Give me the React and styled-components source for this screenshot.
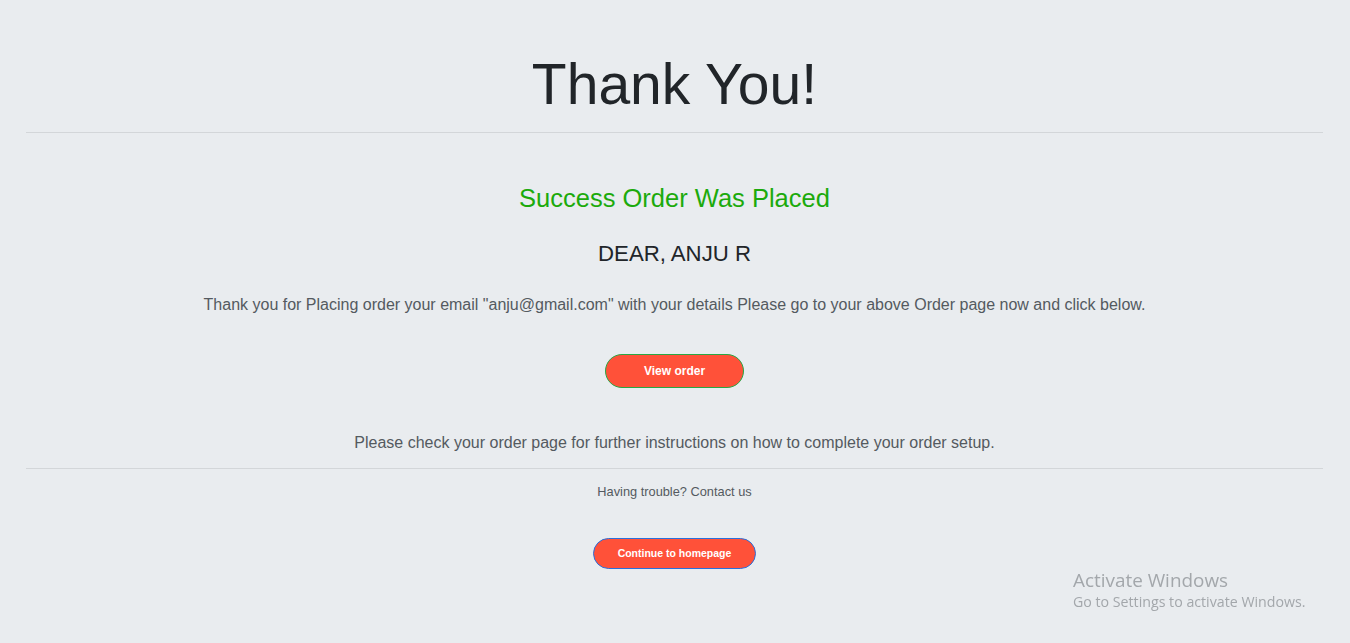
import React from "react";
import styled, { createGlobalStyle } from "styled-components";

const Global = createGlobalStyle`
  html, body { margin: 0; padding: 0; background: #e9ecef; }
  body { font-family: "Liberation Sans", Arial, sans-serif; color: #212529; }
`;

const Page = styled.main`
  min-height: 643px;
  box-sizing: border-box;
  padding: 50px 27px 0 26px;
  display: flex;
  flex-direction: column;
  align-items: center;
  text-align: center;
`;

const Title = styled.h1`
  margin: 0;
  font-size: 57px;
  font-weight: 400;
  line-height: 1.2;
  color: #212529;
`;

const Rule = styled.hr`
  align-self: stretch;
  margin: ${(p) => p.$top}px 0 0;
  border: 0;
  border-top: 1px solid #d3d6d9;
  height: 0;
`;

const Heading = styled.h3`
  margin: ${(p) => p.$top}px 0 0;
  font-size: ${(p) => p.$size}px;
  font-weight: 400;
  line-height: 1.2;
  color: ${(p) => p.$color};
`;

const Text = styled.p`
  margin: ${(p) => p.$top}px 0 0;
  font-size: ${(p) => p.$size}px;
  line-height: 1.5;
  color: #545a60;
`;

const PillButton = styled.a`
  margin-top: ${(p) => p.$top}px;
  box-sizing: border-box;
  display: inline-flex;
  align-items: center;
  justify-content: center;
  width: ${(p) => p.$w}px;
  height: ${(p) => p.$h}px;
  border-radius: 999px;
  background: #ff5139;
  border: 1px solid ${(p) => p.$border};
  color: #ffffff;
  font-weight: 700;
  font-size: ${(p) => p.$size}px;
  text-decoration: none;
  cursor: pointer;
`;

const Watermark = styled.div`
  position: fixed;
  left: 1073px;
  top: 569px;
  font-family: "Open Sans", "Noto Sans", sans-serif;
  color: #a3a7ab;
  pointer-events: none;
  text-align: left;
`;

const WmTitle = styled.div`
  font-size: 18.9px;
  line-height: 22px;
`;

const WmSub = styled.div`
  font-size: 14.2px;
  line-height: 20px;
  margin-top: 1px;
`;

export default function App() {
  return (
    <>
      <Global />
      <Page>
        <Title>Thank You!</Title>
        <Rule $top={14} />
        <Heading $top={50} $size={25.5} $color="#1caa0c">
          Success Order Was Placed
        </Heading>
        <Heading $top={27} $size={22.2} $color="#212529">
          DEAR, ANJU R
        </Heading>
        <Text $top={25} $size={16}>
          Thank you for Placing order your email "anju@gmail.com" with your details
          Please go to your above Order page now and click below.
        </Text>
        <PillButton $top={37} $w={139} $h={34} $size={12} $border="#28a745">
          View order
        </PillButton>
        <Text $top={43} $size={16}>
          Please check your order page for further instructions on how to complete
          your order setup.
        </Text>
        <Rule $top={13} />
        <Text $top={13} $size={12.8}>
          Having trouble? Contact us
        </Text>
        <PillButton $top={37} $w={163} $h={31} $size={10.5} $border="#2a6fdb">
          Continue to homepage
        </PillButton>
      </Page>
      <Watermark>
        <WmTitle>Activate Windows</WmTitle>
        <WmSub>Go to Settings to activate Windows.</WmSub>
      </Watermark>
    </>
  );
}
